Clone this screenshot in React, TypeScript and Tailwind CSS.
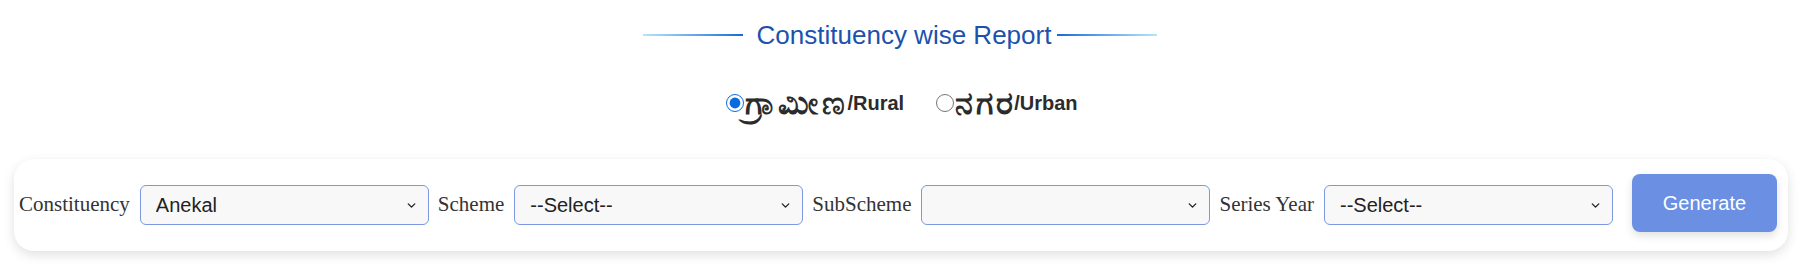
import { ChevronDown } from "lucide-react"

// filter row definition
const fields = [
  { label: "Constituency", value: "Anekal" },
  { label: "Scheme", value: "--Select--" },
  { label: "SubScheme", value: "" },
  { label: "Series Year", value: "--Select--" },
]

function SelectBox({ value }: { value: string }) {
  return (
    <div className="relative w-[289px] shrink-0">
      <select
        defaultValue={value}
        className="h-[40px] w-full appearance-none rounded-[6px] border border-[#7b98e0] bg-[#f8f8f8] pl-[15px] pr-8 text-[20px] text-[#222] outline-none [font-family:'Liberation_Sans',Arial,sans-serif]"
      >
        <option value={value}>{value}</option>
      </select>
      <ChevronDown
        className="pointer-events-none absolute right-[11px] top-[14px] h-[13px] w-[13px] text-[#222]"
        strokeWidth={2.5}
      />
    </div>
  )
}

export default function App() {
  return (
    <div className="h-[264px] w-full bg-white [font-family:'Liberation_Sans',Arial,sans-serif]">
      {/* heading */}
      <div className="flex items-center justify-center pt-[19px]">
        <div className="h-[2px] w-[100px] bg-gradient-to-r from-[#b5e6f7] to-[#1768d8]" />
        <h2 className="ml-[14px] mr-[6px] text-[26px] leading-[32px] text-[#1b52ad]">Constituency wise Report</h2>
        <div className="h-[2px] w-[100px] bg-gradient-to-r from-[#1768d8] to-[#b5e6f7]" />
      </div>

      {/* rural / urban */}
      <div className="mt-[34px] flex h-[36px] items-center justify-center gap-[32px] pl-[4px] text-[20px] font-bold text-[#2b2b2b]">
        <label className="flex items-center">
          <input type="radio" name="area" defaultChecked className="m-0 h-[18px] w-[18px] accent-[#0a6ae0]" />
          <span className="ml-[1px] mr-[-2px] text-[32px] leading-[36px] tracking-[4px]">ಗ್ರಾಮೀಣ</span>
          <span>/Rural</span>
        </label>
        <label className="flex items-center">
          <input type="radio" name="area" className="m-0 h-[18px] w-[18px]" />
          <span className="ml-[1px] mr-[-2px] text-[32px] leading-[36px] tracking-[3px]">ನಗರ</span>
          <span>/Urban</span>
        </label>
      </div>

      {/* filter card */}
      <div className="ml-[14px] mr-[12px] mt-[38px] flex h-[92px] items-center rounded-[20px] bg-white pl-[5px] pr-[14px] shadow-[0_4px_12px_rgba(0,0,0,0.12)]">
        {fields.map((f, i) => (
          <div key={f.label} className={`flex shrink-0 items-center gap-[10px] ${i > 0 ? "ml-[9px]" : ""}`}>
            <span className="whitespace-nowrap text-[21px] text-[#333] [font-family:'Liberation_Serif','Times_New_Roman',serif]">{f.label}</span>
            <SelectBox value={f.value} />
          </div>
        ))}
        <button className="ml-[19px] mt-[-4px] h-[58px] w-[145px] shrink-0 rounded-[8px] bg-[#6a8fe3] text-[20px] text-white shadow-[0_4px_8px_rgba(0,0,0,0.12)]">
          Generate
        </button>
      </div>
    </div>
  )
}
